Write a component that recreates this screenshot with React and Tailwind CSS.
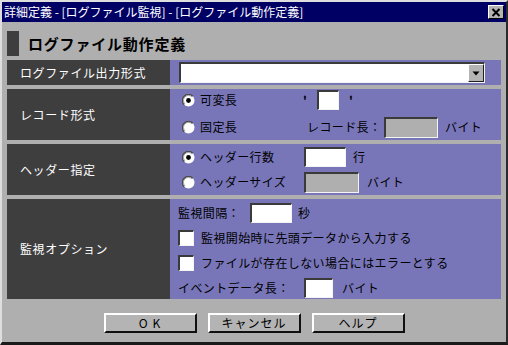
import React from 'react';

const sunken = 'bg-white border-t-2 border-l-2 border-t-[#3a3a3a] border-l-[#3a3a3a] border-b border-r border-b-[#f4f4f4] border-r-[#f4f4f4]';
const sunkenGray = 'bg-[#afafaf] border-t-2 border-l-2 border-t-[#3a3a3a] border-l-[#3a3a3a] border-b border-r border-b-[#f4f4f4] border-r-[#f4f4f4]';

function Radio({ checked }) {
  return (
    <svg width="13" height="13" viewBox="0 0 13 13" className="shrink-0">
      <circle cx="6.5" cy="6.5" r="6" fill="#ffffff" />
      <path d="M2.2 10.8 A6 6 0 0 1 10.8 2.2" stroke="#4a4a4a" strokeWidth="1.4" fill="none" />
      <path d="M2.9 9.9 A4.8 4.8 0 0 1 9.9 2.9" stroke="#9a9a9a" strokeWidth="1" fill="none" />
      {checked && <circle cx="6.5" cy="6.5" r="2.4" fill="#000000" />}
    </svg>
  );
}

function Check() {
  return <div className={`w-[16px] h-[16px] shrink-0 ${sunken}`} />;
}

function Button({ children }) {
  return (
    <div className="w-[93px] h-[20px] flex items-center justify-center bg-[#b4b4b4] border-t-2 border-l-2 border-t-white border-l-white border-b-2 border-r-2 border-b-[#101010] border-r-[#101010] text-[12px] tracking-[1px] text-black">
      {children}
    </div>
  );
}

function Row({ label, height, children }) {
  return (
    <div className={`flex ${height}`}>
      <div className="w-[163px] bg-[#3e3e3e] flex items-center pl-[13px] text-white text-[12px] tracking-[0.6px]">
        {label}
      </div>
      <div className="flex-1 bg-[#7876b9] text-black text-[12px] tracking-[0.4px]">{children}</div>
    </div>
  );
}

export default function App() {
  return (
    <div className="w-[508px] h-[345px] bg-[#afafaf] flex flex-col border-t-2 border-l-2 border-t-[#dedede] border-l-[#dedede] border-r-2 border-b-[3px] border-r-[#2a2a2a] border-b-[#1a1a1a] font-['Noto_Sans_CJK_JP','Noto_Sans',sans-serif] leading-none select-none">
      {/* title bar */}
      <div className="h-[20px] bg-[#000064] flex items-center justify-between pl-[2px] pr-[2px]">
        <span className="text-white text-[12px]">詳細定義 - [ログファイル監視] - [ログファイル動作定義]</span>
        <div className="w-[16px] h-[14px] bg-[#b4b4b4] border-t border-l border-t-white border-l-white border-b border-r border-b-black border-r-black flex items-center justify-center">
          <svg width="10" height="9" viewBox="0 0 10 9">
            <path d="M1.5 1 L8.5 8 M8.5 1 L1.5 8" stroke="#000" strokeWidth="2" />
          </svg>
        </div>
      </div>

      <div className="flex flex-col px-[5px] pt-[9px]">
        {/* heading */}
        <div className="flex items-center h-[25px]">
          <div className="w-[12px] h-[25px] bg-[#3e3e3e]" />
          <span className="ml-[9px] text-[15px] font-bold tracking-[0.8px] text-black">ログファイル動作定義</span>
        </div>

        <div className="flex flex-col gap-[4px] mt-[4px]">
          <Row label="ログファイル出力形式" height="h-[25px]">
            <div className="h-full flex items-center pl-[9px]">
              <div className={`w-[306px] h-[21px] flex justify-end ${sunken}`}>
                <div className="w-[16px] h-full bg-[#b4b4b4] border-t border-l border-t-white border-l-white border-b border-r border-b-[#202020] border-r-[#202020] flex items-center justify-center">
                  <svg width="8" height="5" viewBox="0 0 8 5">
                    <path d="M0.5 0.5 L7.5 0.5 L4 4.5 Z" fill="#000" />
                  </svg>
                </div>
              </div>
            </div>
          </Row>

          <Row label="レコード形式" height="h-[51px]">
            <div className="flex flex-col gap-[5px] pl-[12px]">
              <div className="h-[22px] flex items-center">
                <div className="w-[121px] flex items-center gap-[5px]">
                  <Radio checked />
                  <span>可変長</span>
                </div>
                <span className="w-[14px] font-bold">'</span>
                <div className={`w-[22px] h-[20px] ${sunken}`} />
                <span className="ml-[10px] font-bold">'</span>
              </div>
              <div className="h-[22px] flex items-center">
                <div className="w-[121px] flex items-center gap-[5px]">
                  <Radio />
                  <span>固定長</span>
                </div>
                <span className="w-[81px] pl-[4px]">レコード長：</span>
                <div className={`w-[54px] h-[21px] ${sunkenGray}`} />
                <span className="ml-[7px]">バイト</span>
              </div>
            </div>
          </Row>

          <Row label="ヘッダー指定" height="h-[51px]">
            <div className="flex flex-col gap-[3px] pl-[12px] pt-[2px]">
              <div className="h-[22px] flex items-center">
                <div className="w-[122px] flex items-center gap-[5px]">
                  <Radio checked />
                  <span>ヘッダー行数</span>
                </div>
                <div className={`w-[42px] h-[20px] ${sunken}`} />
                <span className="ml-[7px]">行</span>
              </div>
              <div className="h-[22px] flex items-center">
                <div className="w-[122px] flex items-center gap-[5px]">
                  <Radio />
                  <span>ヘッダーサイズ</span>
                </div>
                <div className={`w-[55px] h-[21px] ${sunkenGray}`} />
                <span className="ml-[8px]">バイト</span>
              </div>
            </div>
          </Row>

          <Row label="監視オプション" height="h-[100px]">
            <div className="flex flex-col pl-[8px] pt-[1px]">
              <div className="h-[25px] flex items-center">
                <span className="w-[72px]">監視間隔：</span>
                <div className={`w-[42px] h-[20px] ${sunken}`} />
                <span className="ml-[6px]">秒</span>
              </div>
              <div className="h-[25px] flex items-center gap-[7px]">
                <Check />
                <span>監視開始時に先頭データから入力する</span>
              </div>
              <div className="h-[25px] flex items-center gap-[7px]">
                <Check />
                <span>ファイルが存在しない場合にはエラーとする</span>
              </div>
              <div className="h-[25px] flex items-center">
                <span className="w-[126px]">イベントデータ長：</span>
                <div className={`w-[29px] h-[20px] ${sunken}`} />
                <span className="ml-[9px]">バイト</span>
              </div>
            </div>
          </Row>
        </div>

        {/* buttons */}
        <div className="flex justify-center gap-[11px] mt-[14px]">
          <Button>O K</Button>
          <Button>キャンセル</Button>
          <Button>ヘルプ</Button>
        </div>
      </div>
    </div>
  );
}
